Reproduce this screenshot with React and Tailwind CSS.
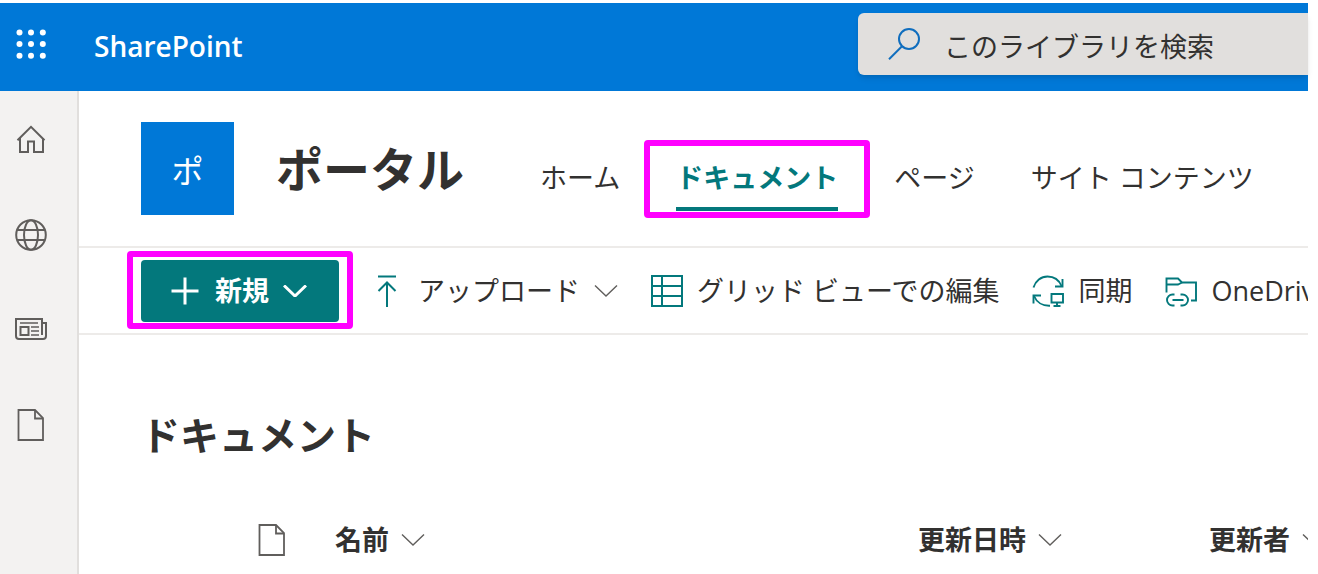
const SIDE_LINKS = [
  { label: "Home", Icon: HomeIcon },
  { label: "Sites", Icon: GlobeIcon },
  { label: "News", Icon: NewsIcon },
  { label: "Files", Icon: FileIcon },
];

const NAV_LINKS = [
  { label: "ホーム" },
  { label: "ドキュメント", active: true },
  { label: "ページ" },
  { label: "サイト コンテンツ" },
];

const COMMANDS = [
  { label: "アップロード", Icon: UploadIcon, menu: true },
  { label: "グリッド ビューでの編集", Icon: GridIcon },
  { label: "同期", Icon: SyncIcon },
  { label: "OneDrive", Icon: ShortcutIcon },
];

function WaffleIcon() {
  return (
    <svg className="w-8 h-8" viewBox="0 0 32 32" fill="currentColor" aria-hidden="true">
      {[4.5, 16, 27.8].map((y) =>
        [4.5, 16, 27.8].map((x) => <circle key={`${x}-${y}`} cx={x} cy={y} r="3" />)
      )}
    </svg>
  );
}

function SearchIcon() {
  return (
    <svg className="w-8 h-8 shrink-0 text-[#106ebe]" viewBox="0 0 32 32" fill="none" stroke="currentColor" strokeWidth="2" aria-hidden="true">
      <circle cx="21" cy="11" r="10" />
      <path d="M14 18.2 1 31.2" />
    </svg>
  );
}

function HomeIcon() {
  return (
    <svg className="w-8 h-8" viewBox="0 0 32 32" fill="none" stroke="currentColor" strokeWidth="2" aria-hidden="true">
      <path d="M2.5 16.2 16 2.8l13.5 13.4" />
      <path d="M5 14v14h8V17.5h6V28h9V14" />
    </svg>
  );
}

function GlobeIcon() {
  return (
    <svg className="w-8 h-8" viewBox="0 0 32 32" fill="none" stroke="currentColor" strokeWidth="2" aria-hidden="true">
      <circle cx="16" cy="16" r="14.8" />
      <ellipse cx="16" cy="16" rx="7" ry="14.8" />
      <path d="M2 11h28M2 21h28" />
    </svg>
  );
}

function NewsIcon() {
  return (
    <svg className="w-8 h-8" viewBox="0 0 32 32" fill="none" stroke="currentColor" strokeWidth="2" aria-hidden="true">
      <path d="M27 21V5H1v17a3 3 0 0 0 3 3h24a3 3 0 0 0 3-3V9h-4" />
      <path d="M5 9h18M16 13h8M16 17h8M16 21h8" strokeWidth="1.5" />
      <path d="M5.500 13h8v8h-8z" />
    </svg>
  );
}

function FileIcon() {
  return (
    <svg className="w-8 h-8" viewBox="0 0 32 32" fill="none" stroke="currentColor" strokeWidth="1.8" aria-hidden="true">
      <path d="M3.500 1h16.500l8 8v22H3.500z" />
      <path d="M20 1v8.500h8" />
    </svg>
  );
}

function PlusIcon() {
  return (
    <svg className="w-8 h-8" viewBox="0 0 32 32" fill="none" stroke="currentColor" strokeWidth="3" aria-hidden="true">
      <path d="M16 2.5v27M2.5 16h27" />
    </svg>
  );
}

function UploadIcon() {
  return (
    <svg className="w-8 h-8" viewBox="0 0 32 32" fill="none" stroke="currentColor" strokeWidth="2" aria-hidden="true">
      <path d="M6 1.5h18M15 32V7.500M6.500 16 15 7.500l8.500 8.500" />
    </svg>
  );
}

function GridIcon() {
  return (
    <svg className="w-8 h-8" viewBox="0 0 32 32" fill="none" stroke="currentColor" strokeWidth="2" aria-hidden="true">
      <path d="M1 1h30v30H1zM11 1v30M1 11h30M1 21h30" />
    </svg>
  );
}

function SyncIcon() {
  return (
    <svg className="w-8 h-8" viewBox="0 0 32 32" fill="none" stroke="currentColor" strokeWidth="1.9" aria-hidden="true">
      <path d="M1.500 12.500C3.500 6 9 1.500 15.500 1.500c6 0 11.500 3.500 14 9.500" />
      <path d="M30.500 4v7.500H23" />
      <path d="M1.500 28.500v-8H9" />
      <path d="M2 21c2.500 6 8.500 10 16 9.700" />
      <path d="M19.500 19h11.500v8.500H19.500zM25 27.500V31M21.500 31h7" />
    </svg>
  );
}

function ShortcutIcon() {
  return (
    <svg className="w-8 h-8" viewBox="0 0 32 32" fill="none" stroke="currentColor" strokeWidth="1.900" aria-hidden="true">
      <path d="M1.500 17.500V3.500H13l4 4h14v18h-5" />
      <path d="M1.500 9.500H13l4-2" />
      <path d="M9.500 19.500h-2a5.500 5.500 0 0 0 0 11h2M15.500 19.500h2a5.500 5.500 0 0 1 0 11h-2M7.500 25h11" />
    </svg>
  );
}

function Chevron({ className = "" }) {
  return (
    <svg className={`w-6 h-3 shrink-0 ${className}`} viewBox="0 0 24 12" fill="none" stroke="currentColor" strokeWidth="1.4" aria-hidden="true">
      <path d="M1 .5 12 11 23 .5" />
    </svg>
  );
}

// Magenta frame around the control the reader should click
function Highlight({ className }) {
  return <span className={`absolute border-6 border-[#ff00ff] rounded-sm pointer-events-none ${className}`} />;
}

function TopBar() {
  return (
    <header className="flex items-center justify-between h-[88px] pb-1.5 bg-[#0078d7] text-white">
      <div className="flex items-center">
        <button type="button" aria-label="App launcher" className="flex justify-center w-[62px]">
          <WaffleIcon />
        </button>
        <a href="#" className="ml-8 pt-1 text-[28px] leading-9 font-semibold">SharePoint</a>
      </div>
      <label className="flex items-center gap-6 w-[450px] h-[62px] pl-[30px] rounded-l-md bg-[#e1dfdd] shadow-md overflow-hidden">
        <SearchIcon />
        <input
          type="search"
          aria-label="このライブラリを検索"
          placeholder="このライブラリを検索"
          className="flex-1 min-w-0 pt-1.5 text-[27px] text-[#323130] placeholder:text-[#323130] outline-none"
        />
      </label>
    </header>
  );
}

function SideRail() {
  return (
    <nav className="w-[79px] shrink-0 pt-px bg-[#f3f2f1] border-r-2 border-[#e1dfdd] text-[#605e5c]">
      {SIDE_LINKS.map(({ label, Icon }) => (
        <a key={label} href="#" aria-label={label} className="flex items-center justify-center w-[62px] h-[95px]">
          <Icon />
        </a>
      ))}
    </nav>
  );
}

function SiteHeader() {
  return (
    <div className="flex items-center h-[157px] pl-[62px] border-b-2 border-[#edebe9]">
      <div className="flex items-center justify-center w-[93px] h-[93px] pt-1 shrink-0 bg-[#0078d7] text-white text-[32px]">ポ</div>
      <h1 className="ml-[42px] text-[47px] leading-[60px] font-bold">ポータル</h1>
      <nav className="flex gap-14 ml-[76px] pt-5">
        {NAV_LINKS.map(({ label, active }) =>
          active ? (
            <a key={label} href="#" aria-current="page" className="relative h-16 border-b-4 border-[#03787c] text-[27px] leading-[62px] font-bold text-[#03787c]">
              {label}
              <Highlight className="-top-[7px] -bottom-[11px] -inset-x-8" />
            </a>
          ) : (
            <a key={label} href="#" className="text-[27px] leading-[62px]">{label}</a>
          )
        )}
      </nav>
    </div>
  );
}

function CommandBar() {
  return (
    <div className="flex items-center gap-[33px] h-[87px] pl-[62px] border-b-2 border-[#edebe9]">
      <button type="button" className="relative flex items-center justify-center gap-3.5 w-[198px] h-[62px] pr-1 shrink-0 rounded-sm bg-[#03787c] text-white text-[27px] font-bold">
        <PlusIcon />
        <span className="pt-0.5">新規</span>
        <Chevron className="stroke-3" />
        <Highlight className="-top-[9px] -bottom-[7px] -inset-x-3.5" />
      </button>
      {COMMANDS.map(({ label, Icon, menu }) => (
        <button key={label} type="button" className="flex items-center gap-3.5 shrink-0 text-[27px]">
          <span className="text-[#03787c]"><Icon /></span>
          <span className="pt-0.5">{label}</span>
          {menu && <Chevron className="text-[#605e5c]" />}
        </button>
      ))}
    </div>
  );
}

function ColumnHeader({ label }) {
  return (
    <th scope="col" className="p-0 text-left">
      <button type="button" className="flex items-center gap-3 text-[27px] leading-9 font-bold">
        {label}
        <Chevron className="text-[#605e5c]" />
      </button>
    </th>
  );
}

function DocumentList() {
  return (
    <section>
      <h2 className="mt-[70px] pl-[62px] text-[39px] leading-[60px] font-bold">ドキュメント</h2>
      <table className="w-full mt-[57px] table-fixed">
        <colgroup>
          <col className="w-[256px]" />
          <col className="w-[583px]" />
          <col className="w-[291px]" />
          <col />
        </colgroup>
        <thead>
          <tr>
            <th scope="col" aria-label="種類" className="py-0 pr-0 pl-[177px] text-[#605e5c]"><FileIcon /></th>
            <ColumnHeader label="名前" />
            <ColumnHeader label="更新日時" />
            <ColumnHeader label="更新者" />
          </tr>
        </thead>
      </table>
    </section>
  );
}

export default function App() {
  return (
    <div className="flex flex-col h-screen pt-[3px] pr-2.5 overflow-hidden bg-white text-[#323130] font-['Open_Sans','Noto_Sans_CJK_JP',sans-serif] whitespace-nowrap">
      <TopBar />
      <div className="flex flex-1 min-h-0">
        <SideRail />
        <main className="flex-1 min-w-0 overflow-hidden">
          <SiteHeader />
          <CommandBar />
          <DocumentList />
        </main>
      </div>
    </div>
  );
}
